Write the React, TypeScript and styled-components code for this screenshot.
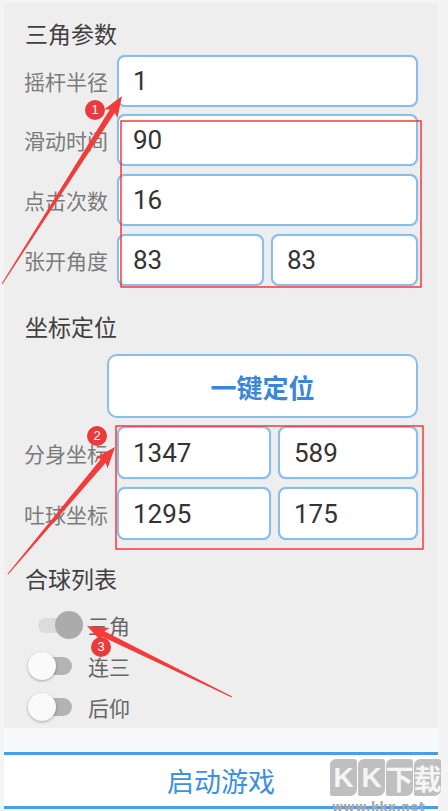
import * as React from 'react'
import styled, { createGlobalStyle } from 'styled-components'

const GlobalStyle = createGlobalStyle`
  body {
    margin: 0;
    background: #f4f4f4;
    font-family: "Noto Sans CJK SC", "Noto Sans", sans-serif;
  }
`

const Page = styled.div`
  position: relative;
  width: 448px;
  height: 811px;
  overflow: hidden;
  background: #f4f4f4;
`

const Panel = styled.div`
  margin: 3px 10px 0 4px;
  height: 725px;
  background: #eeeeee;
  display: flex;
  flex-direction: column;

  & > * {
    flex-shrink: 0;
  }
`

const SectionTitle = styled.div<{ top: number }>`
  margin-top: ${p => p.top}px;
  padding-left: 21px;
  height: 30px;
  line-height: 30px;
  font-size: 23px;
  color: #404040;
`

const FormRow = styled.div<{ top: number }>`
  display: grid;
  grid-template-columns: 113px 1fr;
  align-items: center;
  margin-top: ${p => p.top}px;
  padding-right: 20px;
`

const Label = styled.div`
  padding-left: 20px;
  font-size: 21px;
  color: #7b7b7b;
  white-space: nowrap;
`

const Pair = styled.div<{ cols: string }>`
  display: grid;
  grid-template-columns: ${p => p.cols};
  gap: 7px;
`

const Field = styled.div<{ h: number }>`
  box-sizing: border-box;
  height: ${p => p.h}px;
  display: flex;
  align-items: center;
  padding-left: 14px;
  background: #fff;
  border: 2px solid #88bdec;
  border-radius: 8px;
  box-shadow: 0 0 1px #9cc8ef;
  font-family: Roboto, "Noto Sans", sans-serif;
  font-size: 26px;
  color: #333;
`

const LocateButton = styled.div`
  box-sizing: border-box;
  margin: 13px 20px 0 103px;
  height: 64px;
  display: flex;
  align-items: center;
  justify-content: center;
  background: #fff;
  border: 2px solid #88bdec;
  border-radius: 10px;
  font-size: 26px;
  font-weight: bold;
  color: #3a86d8;
`

const SwitchList = styled.div`
  display: flex;
  flex-direction: column;
  margin-top: 11px;
  padding-left: 24px;
`

const SwitchRow = styled.div`
  display: flex;
  align-items: center;
  gap: 4px;
  height: 41px;
`

const Switch = styled.div`
  position: relative;
  width: 56px;
  height: 30px;
`

const Track = styled.div<{ on: boolean }>`
  position: absolute;
  top: ${p => (p.on ? 8 : 6)}px;
  left: ${p => (p.on ? 10 : 12)}px;
  width: ${p => (p.on ? 42 : 32)}px;
  height: ${p => (p.on ? 15 : 18)}px;
  border-radius: 9px;
  background: ${p => (p.on ? '#dcdcdc' : '#b3b3b3')};
`

const Thumb = styled.div<{ on: boolean }>`
  position: absolute;
  top: 1px;
  left: ${p => (p.on ? 27 : 0)}px;
  width: 28px;
  height: 28px;
  border-radius: 50%;
  background: ${p => (p.on ? '#ababab' : '#fafafa')};
  box-shadow: ${p => (p.on ? 'none' : '0 1px 3px rgba(0,0,0,0.3)')};
`

const SwitchText = styled.div`
  font-size: 21px;
  color: #666;
`

const Footer = styled.div`
  margin: 0 10px 0 4px;
  padding-top: 24px;
  background: #f8f9fa;
`

const StartButton = styled.div`
  height: 51px;
  display: flex;
  align-items: center;
  justify-content: center;
  background: #fff;
  border-top: 3px solid #4a9de9;
  border-bottom: 3px solid #4a9de9;
  font-size: 27px;
  color: #3d8fe0;
`

const Overlay = styled.svg`
  position: absolute;
  left: 0;
  top: 0;
  pointer-events: none;
`

const Badge = styled.div<{ x: number; y: number }>`
  position: absolute;
  left: ${p => p.x - 10}px;
  top: ${p => p.y - 10}px;
  width: 20px;
  height: 20px;
  border-radius: 50%;
  background: #e93b3b;
  color: #fff;
  font-family: "Liberation Sans", sans-serif;
  font-size: 13px;
  line-height: 20px;
  text-align: center;
`

const Watermark = styled.div`
  position: absolute;
  left: 330px;
  top: 759px;
  display: flex;
  flex-direction: column;
  align-items: flex-start;
  gap: 4px;
`

const MarkTiles = styled.div`
  display: flex;
  gap: 1px;
`

const Tile = styled.span`
  width: 27px;
  height: 37px;
  display: flex;
  align-items: center;
  justify-content: center;
  background: #b9b9b9;
  border-radius: 6px 3px 7px 2px;
  color: #f4f4f4;
  font-family: "Liberation Sans", "Noto Sans CJK SC", sans-serif;
  font-size: 28px;
  font-weight: bold;
  opacity: 0.9;
`

const MarkUrl = styled.div`
  padding-left: 2px;
  font-family: "DejaVu Sans", sans-serif;
  font-size: 12px;
  font-weight: bold;
  letter-spacing: 0.5px;
  color: #a3a8ae;
`

type Pt = [number, number]

// tapered annotation arrow, thin at the tail and with a head at the tip
const arrowPoints = (tail: Pt, tip: Pt) => {
  const dx = tip[0] - tail[0]
  const dy = tip[1] - tail[1]
  const len = Math.hypot(dx, dy)
  const ux = dx / len
  const uy = dy / len
  const nx = -uy
  const ny = ux
  const at = (d: number, w: number): string =>
    `${(tail[0] + ux * d + nx * w).toFixed(1)},${(tail[1] + uy * d + ny * w).toFixed(1)}`
  const neck = len - 18
  return [
    at(0, 0.5),
    at(neck, 3),
    at(neck - 3, 8),
    at(len, 0),
    at(neck - 3, -8),
    at(neck, -3),
    at(0, -0.5),
  ].join(' ')
}

const arrows: [Pt, Pt][] = [
  [[2, 284], [122, 96]],
  [[8, 574], [115, 447]],
  [[232, 697], [87, 626]],
]

const switches = [
  { name: '三角', on: true },
  { name: '连三', on: false },
  { name: '后仰', on: false },
]

export default function App() {
  return (
    <Page>
      <GlobalStyle />
      <Panel>
        <SectionTitle top={15}>三角参数</SectionTitle>
        <FormRow top={7}>
          <Label>摇杆半径</Label>
          <Field h={52}>1</Field>
        </FormRow>
        <FormRow top={7}>
          <Label>滑动时间</Label>
          <Field h={52}>90</Field>
        </FormRow>
        <FormRow top={8}>
          <Label>点击次数</Label>
          <Field h={52}>16</Field>
        </FormRow>
        <FormRow top={8}>
          <Label>张开角度</Label>
          <Pair cols="1fr 1fr">
            <Field h={52}>83</Field>
            <Field h={52}>83</Field>
          </Pair>
        </FormRow>

        <SectionTitle top={25}>坐标定位</SectionTitle>
        <LocateButton>一键定位</LocateButton>
        <FormRow top={8}>
          <Label>分身坐标</Label>
          <Pair cols="154px 1fr">
            <Field h={53}>1347</Field>
            <Field h={53}>589</Field>
          </Pair>
        </FormRow>
        <FormRow top={8}>
          <Label>吐球坐标</Label>
          <Pair cols="154px 1fr">
            <Field h={53}>1295</Field>
            <Field h={53}>175</Field>
          </Pair>
        </FormRow>

        <SectionTitle top={23}>合球列表</SectionTitle>
        <SwitchList>
          {switches.map(s => (
            <SwitchRow key={s.name}>
              <Switch>
                <Track on={s.on} />
                <Thumb on={s.on} />
              </Switch>
              <SwitchText>{s.name}</SwitchText>
            </SwitchRow>
          ))}
        </SwitchList>
      </Panel>

      <Footer>
        <StartButton>启动游戏</StartButton>
      </Footer>

      <Watermark>
        <MarkTiles>
          <Tile>K</Tile>
          <Tile>K</Tile>
          <Tile>下</Tile>
          <Tile>载</Tile>
        </MarkTiles>
        <MarkUrl>www.kkx.net</MarkUrl>
      </Watermark>

      <Overlay width={448} height={811}>
        <rect x={121} y={121} width={300} height={166} fill="none" stroke="#ff2a2a" strokeWidth={1.4} />
        <rect x={116} y={426} width={307} height={123} fill="none" stroke="#ff2a2a" strokeWidth={1.4} />
        {arrows.map(([tail, tip], i) => (
          <polygon key={i} points={arrowPoints(tail, tip)} fill="#f23b3b" />
        ))}
      </Overlay>
      <Badge x={95} y={110}>1</Badge>
      <Badge x={97} y={436}>2</Badge>
      <Badge x={101} y={647}>3</Badge>
    </Page>
  )
}
